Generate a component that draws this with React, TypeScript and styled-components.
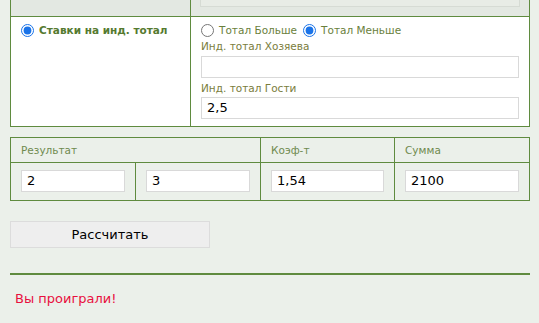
import React from "react";
import styled, { createGlobalStyle } from "styled-components";

const GREEN = "#5f8b3f";

const GlobalStyle = createGlobalStyle`
  body {
    margin: 0;
    background: #ebf0ea;
    font-family: "DejaVu Sans", Verdana, sans-serif;
    font-size: 11px;
  }
`;

const Page = styled.div`
  padding: 0 10px;
  width: 519px;
`;

const Grid = styled.table`
  width: 520px;
  border-collapse: collapse;
  table-layout: fixed;
`;

const Cell = styled.td<{ $bg?: string; $h?: number }>`
  border: 1px solid ${GREEN};
  background: ${(p) => p.$bg || "transparent"};
  padding: 0 10px;
  vertical-align: top;
  height: ${(p) => (p.$h ? `${p.$h}px` : "auto")};
  box-sizing: border-box;
`;

const TopRowCell = styled(Cell)`
  border-top: none;
  background: #e3e8e2;
  height: 16px;
  padding: 0 9px;
`;

const InputStub = styled.div`
  height: 6px;
  border: 1px solid #d6dbd4;
  border-top: none;
  background: #e8ece6;
`;

const RadioLine = styled.div`
  display: flex;
  align-items: center;
  height: 13px;
`;

const RadioRow = styled.label<{ $bold?: boolean }>`
  display: inline-flex;
  align-items: center;
  color: ${(p) => (p.$bold ? "#557a30" : "#6a7f3c")};
  font-weight: ${(p) => (p.$bold ? "bold" : "normal")};
  font-size: 10.5px;
  line-height: 13px;
  margin-right: 6px;
`;

const Radio = styled.input.attrs({ type: "radio" })`
  width: 13px;
  height: 13px;
  margin: 0 5px 0 0;
  accent-color: #1a73e8;
`;

const FieldLabel = styled.div<{ $top: number; $bottom: number }>`
  color: #7a7d3c;
  font-size: 10.5px;
  line-height: 14px;
  margin: ${(p) => `${p.$top}px 0 ${p.$bottom}px`};
`;

const TextInput = styled.input`
  display: block;
  width: 100%;
  height: 22px;
  box-sizing: border-box;
  border: 1px solid #d9d9d9;
  background: #fff;
  font-family: "DejaVu Sans", Verdana, sans-serif;
  font-size: 13px;
  padding: 0 5px;
  color: #000;
  outline: none;
`;

const LeftInner = styled.div`
  padding-top: 7px;
`;

const RightInner = styled.div`
  padding: 7px 0 7px;
`;

const HeadCell = styled.td`
  border: 1px solid ${GREEN};
  color: #6f8a4f;
  font-size: 10.5px;
  height: 25px;
  padding: 0 10px;
  box-sizing: border-box;
`;

const BodyCell = styled.td`
  border: 1px solid ${GREEN};
  padding: 7px 10px 8px;
  line-height: 0;
`;

const ResultTable = styled(Grid)`
  margin-top: 10px;
`;

const Button = styled.button`
  display: block;
  margin-top: 20px;
  width: 200px;
  height: 27px;
  background: #eeeeee;
  border: 1px solid #dcdcdc;
  font-family: "DejaVu Sans", Verdana, sans-serif;
  font-size: 13px;
  color: #000;
`;

const Divider = styled.hr`
  margin: 25px 0 0;
  border: none;
  height: 2px;
  width: 520px;
  background: ${GREEN};
`;

const Message = styled.div`
  color: #e8103e;
  font-size: 13px;
  margin: 16px 0 0 5px;
`;

export default function App() {
  return (
    <>
      <GlobalStyle />
      <Page>
        <Grid>
          <colgroup>
            <col style={{ width: 180 }} />
            <col />
          </colgroup>
          <tbody>
            <tr>
              <TopRowCell />
              <TopRowCell>
                <InputStub />
              </TopRowCell>
            </tr>
            <tr>
              <Cell $bg="#fff">
                <LeftInner>
                  <RadioLine>
                    <RadioRow $bold>
                      <Radio name="mode" defaultChecked />
                      Ставки на инд. тотал
                    </RadioRow>
                  </RadioLine>
                </LeftInner>
              </Cell>
              <Cell $bg="#fff">
                <RightInner>
                  <RadioLine>
                    <RadioRow>
                      <Radio name="total" />
                      Тотал Больше
                    </RadioRow>
                    <RadioRow>
                      <Radio name="total" defaultChecked />
                      Тотал Меньше
                    </RadioRow>
                  </RadioLine>
                  <FieldLabel $top={2} $bottom={3}>Инд. тотал Хозяева</FieldLabel>
                  <TextInput defaultValue="" />
                  <FieldLabel $top={3} $bottom={2}>Инд. тотал Гости</FieldLabel>
                  <TextInput defaultValue="2,5" />
                </RightInner>
              </Cell>
            </tr>
          </tbody>
        </Grid>

        <ResultTable>
          <colgroup>
            <col style={{ width: 125 }} />
            <col style={{ width: 125 }} />
            <col style={{ width: 134 }} />
            <col />
          </colgroup>
          <tbody>
            <tr>
              <HeadCell colSpan={2}>Результат</HeadCell>
              <HeadCell>Коэф-т</HeadCell>
              <HeadCell>Сумма</HeadCell>
            </tr>
            <tr>
              <BodyCell>
                <TextInput defaultValue="2" />
              </BodyCell>
              <BodyCell>
                <TextInput defaultValue="3" />
              </BodyCell>
              <BodyCell>
                <TextInput defaultValue="1,54" />
              </BodyCell>
              <BodyCell>
                <TextInput defaultValue="2100" />
              </BodyCell>
            </tr>
          </tbody>
        </ResultTable>

        <Button>Рассчитать</Button>
        <Divider />
        <Message>Вы проиграли!</Message>
      </Page>
    </>
  );
}
